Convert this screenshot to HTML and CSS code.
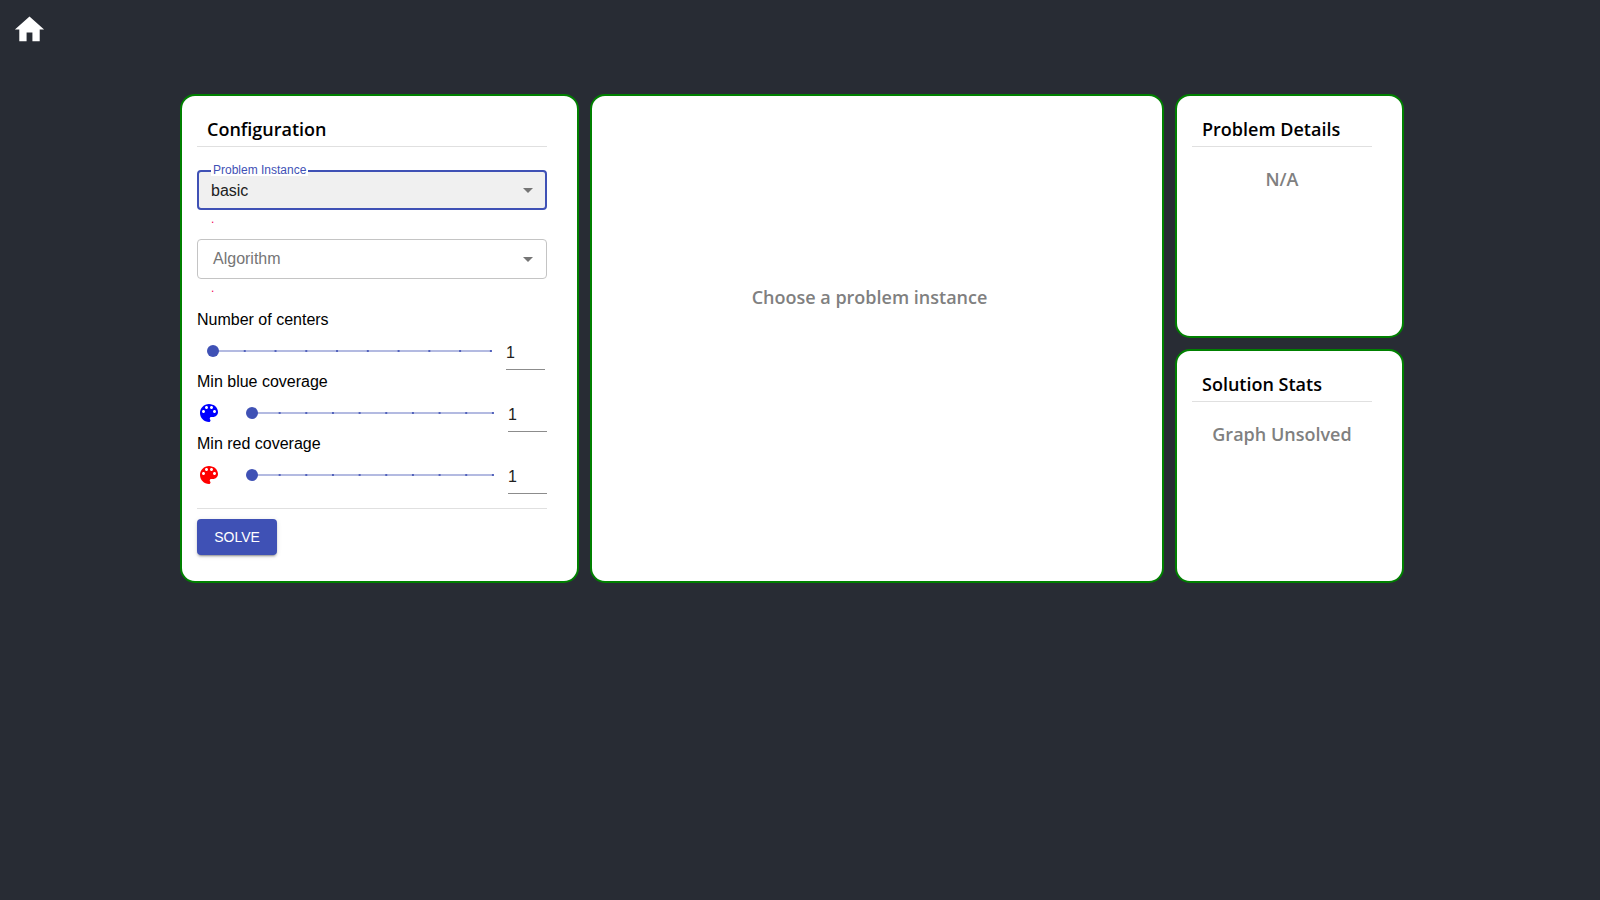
FILE: index.html
```html
<!DOCTYPE html>
<html lang="en">
<head>
<meta charset="utf-8">
<title>Graph Coverage Solver</title>
<link rel="stylesheet" href="styles.css">
</head>
<body>
<header class="topbar">
  <a class="home" href="#" aria-label="Home">
    <svg class="home-icon" viewBox="0 0 24 24" aria-hidden="true"><path d="M10 20v-6h4v6h5v-8h3L12 3 2 12h3v8z"/></svg>
  </a>
</header>
<main class="board">
  <section class="card">
    <h3 class="card-title">Configuration</h3>
    <form class="config">
      <div class="field field-active">
        <select class="select" id="instance"><option>basic</option></select>
        <label class="field-label" for="instance">Problem Instance</label>
        <svg class="arrow" viewBox="0 0 24 24" aria-hidden="true"><path d="M7 10l5 5 5-5z"/></svg>
      </div>
      <p class="helper">.</p>
      <div class="field">
        <select class="select" id="algorithm"><option></option></select>
        <label class="field-label" for="algorithm">Algorithm</label>
        <svg class="arrow" viewBox="0 0 24 24" aria-hidden="true"><path d="M7 10l5 5 5-5z"/></svg>
      </div>
      <p class="helper">.</p>

      <label class="slider-label" for="centers">Number of centers</label>
      <div class="slider-row slider-row-plain">
        <div class="slider"><input class="range" id="centers" type="range" min="1" max="10" value="1"></div>
        <input class="number" type="number" min="1" max="10" value="1" aria-label="Number of centers value">
      </div>

      <label class="slider-label" for="blue">Min blue coverage</label>
      <div class="slider-row">
        <svg class="palette palette-blue" viewBox="0 0 24 24" aria-hidden="true"><path d="M12 3c-4.970 0-9 4.030-9 9s4.030 9 9 9c.83 0 1.500-.67 1.500-1.500 0-.39-.15-.74-.39-1.010-.23-.26-.38-.61-.38-.99 0-.83.67-1.500 1.500-1.500H16c2.760 0 5-2.240 5-5 0-4.420-4.030-8-9-8zm-5.500 9c-.83 0-1.500-.67-1.500-1.500S5.670 9 6.500 9 8 9.670 8 10.500 7.330 12 6.500 12zm3-4C8.670 8 8 7.330 8 6.500S8.670 5 9.500 5s1.500.67 1.500 1.500S10.330 8 9.500 8zm5 0c-.83 0-1.500-.67-1.500-1.500S13.670 5 14.500 5s1.500.67 1.500 1.500S15.330 8 14.500 8zm3 4c-.83 0-1.500-.67-1.500-1.500S16.670 9 17.500 9s1.500.67 1.500 1.500-.67 1.500-1.500 1.500z"/></svg>
        <div class="slider"><input class="range" id="blue" type="range" min="1" max="10" value="1"></div>
        <input class="number" type="number" min="1" max="10" value="1" aria-label="Min blue coverage value">
      </div>

      <label class="slider-label" for="red">Min red coverage</label>
      <div class="slider-row">
        <svg class="palette palette-red" viewBox="0 0 24 24" aria-hidden="true"><path d="M12 3c-4.970 0-9 4.030-9 9s4.030 9 9 9c.83 0 1.500-.67 1.500-1.500 0-.39-.15-.74-.39-1.010-.23-.26-.38-.61-.38-.99 0-.83.67-1.500 1.500-1.500H16c2.760 0 5-2.240 5-5 0-4.420-4.030-8-9-8zm-5.500 9c-.83 0-1.500-.67-1.500-1.500S5.670 9 6.500 9 8 9.670 8 10.500 7.330 12 6.500 12zm3-4C8.670 8 8 7.330 8 6.500S8.670 5 9.500 5s1.500.67 1.500 1.500S10.330 8 9.500 8zm5 0c-.83 0-1.500-.67-1.500-1.500S13.670 5 14.500 5s1.500.67 1.500 1.500S15.330 8 14.500 8zm3 4c-.83 0-1.500-.67-1.500-1.500S16.670 9 17.500 9s1.500.67 1.500 1.500-.67 1.500-1.500 1.500z"/></svg>
        <div class="slider"><input class="range" id="red" type="range" min="1" max="10" value="1"></div>
        <input class="number" type="number" min="1" max="10" value="1" aria-label="Min red coverage value">
      </div>

      <div class="actions"><button class="solve" type="button">SOLVE</button></div>
    </form>
  </section>

  <section class="card card-graph">
    <h3 class="note">Choose a problem instance</h3>
  </section>

  <div class="side">
    <section class="card">
      <h3 class="card-title">Problem Details</h3>
      <h3 class="note">N/A</h3>
    </section>
    <section class="card">
      <h3 class="card-title">Solution Stats</h3>
      <h3 class="note">Graph Unsolved</h3>
    </section>
  </div>
</main>
</body>
</html>
```
FILE: styles.css
```css
* { box-sizing: border-box; }

body {
  margin: 0;
  min-height: 100vh;
  background: #282c34;
  color: #000;
  font: 16px/24px "Liberation Sans", Arial, sans-serif;
}

.topbar { padding: 12px; height: 94px; }
.home { display: inline-block; }
.home-icon { display: block; width: 35px; height: 35px; fill: #fff; }

.board {
  display: grid;
  grid-template-columns: 399fr 574fr 229fr;
  gap: 11px;
  padding: 0 196px 0 180px;
}

.card {
  padding: 20px 30px 26px 15px;
  background: #fff;
  border: 2px solid green;
  border-radius: 15px;
}

.card-title,
.note {
  margin: 0;
  font: 600 18px/27px "Open Sans", "Noto Sans", sans-serif;
}
.card-title {
  padding: 0 10px 3px;
  border-bottom: 1px solid #e0e0e0;
}
.note {
  margin-top: 19px;
  color: gray;
  text-align: center;
}
.card-graph { padding-top: 169px; }

.side {
  display: grid;
  grid-template-rows: 244fr 234fr;
  gap: 11px;
}

.config { padding-top: 23px; }

.field { position: relative; height: 40px; }
.select {
  display: block;
  width: 100%;
  height: 100%;
  padding: 0 32px 0 14px;
  appearance: none;
  background: #fff;
  border: 1px solid #c4c4c4;
  border-radius: 4px;
  color: #212121;
  font: 16px "Liberation Sans", Arial, sans-serif;
  outline: none;
}
.field-label {
  position: absolute;
  top: 8px;
  left: 16px;
  color: #757575;
  pointer-events: none;
}
.field-active .select {
  padding-left: 12px;
  background: #f0f0f0;
  border: 2px solid #3f51b5;
}
.field-active .field-label {
  top: -6px;
  left: 14px;
  padding: 0 2px;
  background: #fff;
  color: #3f51b5;
  font-size: 12px;
  line-height: 12px;
}
.arrow {
  position: absolute;
  top: 8px;
  right: 7px;
  width: 24px;
  height: 24px;
  fill: #757575;
  pointer-events: none;
}

.helper {
  margin: 0;
  padding: 0 14px 11px;
  color: #f50057;
  font-size: 12px;
  line-height: 18px;
}

.slider-label { display: block; }
.slider-row {
  display: flex;
  align-items: center;
  height: 38px;
}
.slider-row .number { margin-left: 14px; }
.slider-row-plain { padding-left: 16px; padding-right: 2px; }

/* ten evenly spaced marks over a pale rail */
.slider {
  flex: 1;
  display: flex;
  align-items: center;
  height: 2px;
  background:
    linear-gradient(to right, #5262bc 2px, transparent 2px) 0 0 / calc((100% - 2px) / 9) 2px repeat-x,
    #b3bae1;
}
.palette + .slider { margin-left: 31px; }
.range {
  flex: 1;
  min-width: 0;
  height: 12px;
  margin: 0 -6px;
  appearance: none;
  background: transparent;
}
.range::-webkit-slider-thumb {
  appearance: none;
  width: 12px;
  height: 12px;
  background: #3f51b5;
  border-radius: 50%;
}

.palette { width: 24px; height: 24px; }
.palette-blue { fill: blue; }
.palette-red { fill: red; }

.number {
  width: 39px;
  height: 32px;
  align-self: flex-end;
  padding: 0 0 2px;
  appearance: textfield;
  background: none;
  border: 0;
  border-bottom: 1px solid #8c8c8c;
  color: #212121;
  font: 16px "Liberation Sans", Arial, sans-serif;
}
.number::-webkit-inner-spin-button { appearance: none; margin: 0; }

.actions {
  margin-top: 14px;
  padding-top: 10px;
  border-top: 1px solid #e0e0e0;
}
.solve {
  display: block;
  min-width: 80px;
  height: 36px;
  padding: 0 16px;
  background: #3f51b5;
  border: 0;
  border-radius: 4px;
  box-shadow: 0 3px 1px -2px rgba(0, 0, 0, .2), 0 2px 2px rgba(0, 0, 0, .14), 0 1px 5px rgba(0, 0, 0, .12);
  color: #fff;
  font: 14px "Liberation Sans", Arial, sans-serif;
}
```
